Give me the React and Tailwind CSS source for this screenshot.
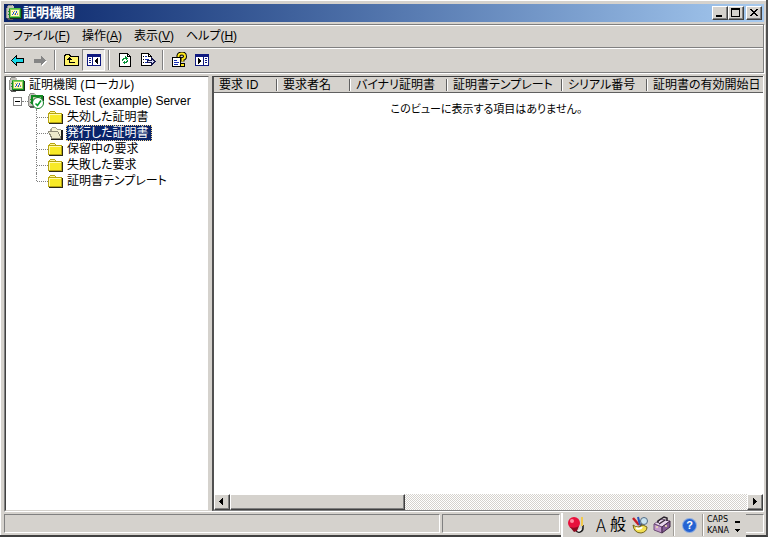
import React from "react";

const raised =
  "border border-t-white border-l-white border-r-[#404040] border-b-[#404040] shadow-[inset_-1px_-1px_0_#808080] bg-[#d5d2cd]";

function Px({ w = 16, h = 16, children }) {
  return (
    <svg
      width={w}
      height={h}
      viewBox={`0 0 ${w} ${h}`}
      shapeRendering="crispEdges"
      aria-hidden="true"
      className="block shrink-0"
    >
      {children}
    </svg>
  );
}

function AuthorityIcon() {
  return (
    <Px>
      <path d="M2 0h5v1h1v13H1V2h1z" fill="#c4c2bc" />
      <path d="M0 3h1v10H0zM1 1h1v2H1zM2 0h4v1H2z" fill="#8e8e8a" />
      <path d="M1 13h6v2H2v-1H1z" fill="#5a5a58" />
      <path d="M2 6h1v1H2zM2 9h1v1H2z" fill="#2f9a30" />
      <path d="M15 4h1v10H4v-1h11z" fill="#1c2a1c" />
      <path d="M3 3h12v10H3z" fill="#128a22" />
      <path d="M3 3h11v1H3z" fill="#4fc048" />
      <path d="M4 4h10v8H4z" fill="#8fce58" />
      <path d="M5 5h8v6H5z" fill="#fffbc4" />
      <path d="M6 9h1v1H6zM7 7h1v2H7zM9 8h1v2H9zM10 6h1v2h-1z" fill="#2450c8" />
      <path d="M6 6h1v1H6zM8 9h1v1H8zM11 8h1v1h-1z" fill="#e8b41c" />
      <path d="M8 6h1v1H8zM11 9h1v1h-1z" fill="#5a78c8" />
    </Px>
  );
}

function ServerIcon() {
  return (
    <Px>
      <path d="M2 0h5v1h1v13H1V2h1z" fill="#c4c2bc" />
      <path d="M0 3h1v10H0zM1 1h1v2H1zM2 0h4v1H2z" fill="#8e8e8a" />
      <path d="M1 13h5v2H2v-1H1z" fill="#5a5a58" />
      <path d="M2 6h1v1H2zM2 9h1v1H2z" fill="#2f9a30" />
      <path d="M3 2h12v9H3z" fill="#128a22" />
      <path d="M5 4h8v3H5z" fill="#c9c9a8" />
      <path d="M15 3h1v5h-1z" fill="#222" />
      <g shapeRendering="auto">
        <circle cx="10" cy="10" r="5.500" fill="#fff" stroke="#0b7a20" strokeWidth="1" />
        <path d="M7.500 10.500l2 2 3.500-5" fill="none" stroke="#06a02c" strokeWidth="1.600" />
      </g>
    </Px>
  );
}

function FolderIcon() {
  return (
    <Px>
      <path d="M0 4h1V3h1V2h5v1h1v1h6v10H0z" fill="#b8a610" />
      <path d="M1 5h12v8H1z" fill="#f8ea28" />
      <path d="M2 3h5v1H2z" fill="#fff79a" />
      <path d="M1 5h12v1H1zM1 5h1v8H1z" fill="#fffbb0" />
      <path d="M14 5h1v10H1v-1h13z" fill="#2c2a18" />
    </Px>
  );
}

function OpenFolderIcon() {
  return (
    <Px>
      <path d="M2 4h1V3h1V2h4v1h1v1h4v10H3z" fill="#a5a294" />
      <path d="M4 3h4v1h1v1h4v8H5z" fill="#f6f3d4" />
      <path d="M0 6h10v1h1v2h1v2h1v3H3v-2H2v-2H1V8H0z" fill="#8d8a78" />
      <path d="M1 7h9v2h1v2h1v2H4v-2H3V9H2V8H1z" fill="#edeacb" />
      <path d="M13 5h2v10H3v-1h10z" fill="#1e1e1a" />
    </Px>
  );
}

function BackIcon() {
  return (
    <Px>
      <path
        d="M2.500 8.500l5-5v3h7v4h-7v3z"
        fill="#18d8e8"
        stroke="#000"
        strokeLinejoin="miter"
      />
    </Px>
  );
}

function ForwardIcon() {
  return (
    <Px>
      <path d="M15 9l-5 5v-3H3v-1h7V6z" fill="#fff" />
      <path d="M14 8.500l-5-5v3H2v4h7v3z" fill="#858585" />
    </Px>
  );
}

function UpIcon() {
  return (
    <Px>
      <path d="M1 3h1V2h5v1h1v1h8v10H1z" fill="#000" />
      <path d="M2 4h1V3h3v1h1v1h8v8H2z" fill="#fff36a" />
      <path d="M6 5h1v1h1v1h1v1H7v2h5v1H6V8H4V7h1V6h1z" fill="#000" />
    </Px>
  );
}

function PaneIcon({ flip }) {
  return (
    <Px>
      <path d="M1 2h14v12H1z" fill="#101a80" />
      <path d={flip ? "M2 5h7v8H2zM10 5h4v8h-4z" : "M2 5h4v8H2zM7 5h7v8H7z"} fill="#fff" />
      <path d={flip ? "M4 6v6l4-3z" : "M12 6v6L8 9z"} fill="#000" />
      <path
        d={flip ? "M11 6h2v1h-2zM11 8h2v1h-2zM11 10h2v1h-2z" : "M3 6h2v1H3zM3 8h2v1H3zM3 10h2v1H3z"}
        fill="#101a80"
      />
    </Px>
  );
}

function RefreshIcon() {
  return (
    <Px>
      <path d="M2 1h9v1h1v1h1v1h1v11H2z" fill="#000" />
      <path d="M3 2h7v3h3v9H3zM11 3h1v1h-1z" fill="#fff" />
      <path
        d="M8 4h1v1h1v1h1v1h-1v1H9V7H7v1H6v1H5V7h1V6h2zM10 8h1v2h-1v1H8v1H7v-1H6v-1h1V9h1v1h1V9h1z"
        fill="#079438"
      />
    </Px>
  );
}

function ExportIcon() {
  return (
    <Px>
      <path d="M1 1h8v1h1v1h1v1h1v10H1z" fill="#000" />
      <path d="M2 2h6v3h3v8H2zM9 3h1v1H9z" fill="#fff" />
      <path d="M3 4h1v1H3zM3 7h1v1H3zM3 10h1v1H3z" fill="#000" />
      <path d="M5 4h2v1H5zM5 7h4v1H5zM5 10h2v1H5z" fill="#1830b0" />
      <path d="M7 8h4V5h1v1h1v1h1v1h1v1h1v1h-1v1h-1v1h-1v1h-1v1h-1v-3H7z" fill="#17194f" />
      <path d="M8 9h4V8h1v1h1v1h-1v1h-1v-1H8z" fill="#d8dcf8" />
    </Px>
  );
}

function HelpIcon() {
  return (
    <Px>
      <path d="M1 5h9v10H1z" fill="#000" />
      <path d="M2 6h7v8H2z" fill="#fff" />
      <path d="M3 8h3v1H3zM3 10h5v1H3zM3 12h4v1H3z" fill="#1830b0" />
      <g shapeRendering="auto" fill="none">
        <path d="M7.500 5V3.500Q8 1.500 11 1.500t3 3Q14 6.500 11.500 7v2.500" stroke="#000" strokeWidth="4" />
        <path d="M7.500 5V3.500Q8 1.500 11 1.500t3 3Q14 6.500 11.500 7v2.500" stroke="#ffe81c" strokeWidth="2" />
      </g>
      <path d="M9 11h5v4H9z" fill="#000" />
      <path d="M10 12h3v2h-3z" fill="#ffe81c" />
    </Px>
  );
}

function ToolButton({ label, pressed, disabled, children }) {
  return (
    <button
      type="button"
      aria-label={label}
      aria-pressed={pressed}
      disabled={disabled}
      className={
        "flex h-[22px] w-[23px] items-center justify-center border " +
        (pressed
          ? "border-t-[#808080] border-l-[#808080] border-r-white border-b-white bg-[#ebe9e6]"
          : "border-transparent")
      }
    >
      {children}
    </button>
  );
}

function ToolSep() {
  return (
    <span className="flex w-2 justify-center">
      <span className="h-5 w-[2px] border-l border-r border-l-[#808080] border-r-white" />
    </span>
  );
}

const menus = [
  ["ファイル", "F"],
  ["操作", "A"],
  ["表示", "V"],
  ["ヘルプ", "H"],
];

const folders = [
  "失効した証明書",
  "発行した証明書",
  "保留中の要求",
  "失敗した要求",
  "証明書テンプレート",
];

const columns = [
  ["要求 ID", "w-16"],
  ["要求者名", "w-[73px]"],
  ["バイナリ証明書", "w-[97px]"],
  ["証明書テンプレート", "w-[115px]"],
  ["シリアル番号", "w-[85px]"],
  ["証明書の有効開始日", ""],
];

function TitleBar() {
  const btn = "flex h-[14px] w-4 items-center justify-center " + raised;
  return (
    <header className="flex h-[18px] items-center bg-gradient-to-r from-[#0a246a] to-[#a6caf0] pl-[2px] pr-[2px]">
      <AuthorityIcon />
      <h1 className="flex-1 pl-[1px] text-[13px] leading-[18px] font-bold text-white">証明機関</h1>
      <button type="button" aria-label="最小化" className={btn}>
        <Px w={10} h={10}><path d="M1 7h6v2H1z" /></Px>
      </button>
      <button type="button" aria-label="最大化" className={btn}>
        <Px w={10} h={10}><path d="M0 0h9v9H0zM1 2v6h7V2z" fillRule="evenodd" /></Px>
      </button>
      <button type="button" aria-label="閉じる" className={"ml-[2px] " + btn}>
        <Px w={10} h={10}>
          <path d="M1 1h2v1h1v1h2V2h1V1h2v1H8v1H7v1H6v1h1v1h1v1h1v1H7V7H6V6H4v1H3v1H1V7h1V6h1V5h1V4H3V3H2V2H1z" />
        </Px>
      </button>
    </header>
  );
}

function Tree() {
  return (
    <nav
      aria-label="コンソール ツリー"
      className="w-[204px] shrink-0 border border-t-[#606060] border-l-[#404040] border-r-[#d5d2cd] border-b-[#d5d2cd] bg-white pl-[3px]"
    >
      <ul>
        <li>
          <a href="#root" className="flex h-4 items-center gap-1">
            <AuthorityIcon />
            <span>証明機関 (ローカル)</span>
          </a>
          <ul>
            <li>
              <div className="flex h-4 items-center pl-1">
                <button
                  type="button"
                  aria-label="折りたたむ"
                  className="flex h-[9px] w-[9px] items-center justify-center border border-[#808080] bg-white"
                >
                  <span className="h-px w-[5px] bg-black" />
                </button>
                <span className="w-[6px] border-t border-dotted border-[#808080]" />
                <a href="#server" className="flex items-center gap-1">
                  <ServerIcon />
                  <span>SSL Test (example) Server</span>
                </a>
              </div>
              <ul className="pl-[27px]">
                {folders.map((name, i) => {
                  const selected = i === 1;
                  const last = i === folders.length - 1;
                  return (
                    <li key={name} className="flex h-4 items-center">
                      <span
                        className={
                          "self-start border-l border-dotted border-[#808080] " +
                          (last ? "h-2" : "h-4")
                        }
                      />
                      <span className="w-[11px] border-t border-dotted border-[#808080]" />
                      <a href={"#folder" + i} className="flex items-center gap-[2px]">
                        {selected ? <OpenFolderIcon /> : <FolderIcon />}
                        <span
                          className={
                            "block h-4 border border-dotted pr-[2px] leading-[14px] " +
                            (selected
                              ? "border-[#f5db95] bg-[#0a246a] text-white"
                              : "border-transparent")
                          }
                        >
                          {name}
                        </span>
                      </a>
                    </li>
                  );
                })}
              </ul>
            </li>
          </ul>
        </li>
      </ul>
    </nav>
  );
}

function ListView() {
  return (
    <main className="flex min-w-0 flex-1 flex-col border-t border-l-2 border-b border-t-[#404040] border-l-[#505050] border-b-[#808080] bg-white">
      <div className="min-h-0 flex-1 overflow-hidden">
        <table className="w-full table-fixed border-collapse">
          <thead>
            <tr className="h-4 bg-[#d5d2cd] shadow-[inset_0_-1px_0_#606060]">
              {columns.map(([name, width], i) => (
                <th
                  key={name}
                  scope="col"
                  className={"overflow-hidden p-0 text-left font-normal whitespace-nowrap " + width}
                >
                  <span className="flex h-4 items-center justify-between pl-[5px]">
                    {name}
                    {i < columns.length - 1 && (
                      <span className="h-3 w-[2px] border-l border-r border-l-[#606060] border-r-white" />
                    )}
                  </span>
                </th>
              ))}
            </tr>
          </thead>
          <tbody>
            <tr>
              <td colSpan={6} className="p-0 pt-2 pr-1 text-center text-[11px] leading-4">
                このビューに表示する項目はありません。
              </td>
            </tr>
          </tbody>
        </table>
      </div>
      <div className="flex h-4 shrink-0 bg-[repeating-conic-gradient(#ffffff_0_25%,#d5d2cd_0_50%)] bg-[length:2px_2px]">
        <button type="button" aria-label="左へ" className={"flex w-4 items-center justify-center " + raised}>
          <Px w={8} h={8}><path d="M5 0v7h-1v-1h-1v-1h-1v-1h-1v-1h1v-1h1v-1h1v-1z" /></Px>
        </button>
        <div className={"w-[175px] " + raised} />
        <div className="flex-1" />
        <button type="button" aria-label="右へ" className={"flex w-4 items-center justify-center " + raised}>
          <Px w={8} h={8}><path d="M2 0v7h1v-1h1v-1h1v-1h1v-1h-1v-1h-1v-1h-1v-1z" /></Px>
        </button>
      </div>
    </main>
  );
}

function LanguageBar() {
  const sep = "h-[22px] w-[2px] border-l border-r border-l-[#a09d98] border-r-white";
  return (
    <aside
      aria-label="言語バー"
      className="absolute right-[22px] bottom-0 flex h-6 w-[185px] items-center border-l-2 border-l-white bg-[#d5d2cd]"
    >
      <button type="button" aria-label="IME" className="ml-[3px]">
        <svg width="20" height="18" viewBox="0 0 20 18" className="block" aria-hidden="true">
          <path d="M10 11v3q1 3 4 2 3-1 3-4V9" fill="none" stroke="#222" strokeWidth="1.600" />
          <path d="M11 14q2 2 4-1" fill="none" stroke="#eee" strokeWidth="1.500" />
          <path d="M16 10V1" stroke="#f1c94c" strokeWidth="2" />
          <circle cx="8" cy="7" r="6" fill="#e8103c" />
          <path d="M4 11q5 2 9-1l-2 5-3 1z" fill="#8c0a20" />
          <circle cx="6" cy="5" r="2" fill="#ff8ba0" />
        </svg>
      </button>
      <button type="button" aria-label="入力モード" className="ml-[7px] w-[16px] text-center font-['Noto_Sans_CJK_JP',sans-serif] text-[17px] leading-[18px] font-light">A</button>
      <button type="button" aria-label="変換モード" className="w-[18px] text-center text-[16px] leading-[18px]">般</button>
      <button type="button" aria-label="IME パッド" className="ml-1">
        <svg width="18" height="18" viewBox="0 0 18 18" className="block" aria-hidden="true">
          <path d="M2 2l6 7" stroke="#c61c24" strokeWidth="2.500" />
          <path d="M7 1l2 8" stroke="#2855be" strokeWidth="2" />
          <circle cx="13" cy="5" r="3.500" fill="#c8e2ef" stroke="#516b85" />
          <path d="M11 8l-3 4" stroke="#555" strokeWidth="2" />
          <path d="M2 9q5 4 10 0l4 2q0 5-6 6-7 0-8-8z" fill="#f2df52" stroke="#746518" />
          <path d="M5 12q4 2 6-1" stroke="#fff" strokeWidth="2" fill="none" />
        </svg>
      </button>
      <button type="button" aria-label="ツール" className="ml-1">
        <svg width="18" height="18" viewBox="0 0 18 18" className="block" aria-hidden="true">
          <path d="M1 8l7-5 9 2-8 6z" fill="#e8d6ec" stroke="#7a5a80" />
          <path d="M5 7V5l6-4 3 1v3" fill="none" stroke="#2a222c" strokeWidth="1.500" />
          <path d="M6 8l6-4" stroke="#3b2b3c" strokeWidth="1.500" />
          <path d="M1 8l8 3v6l-8-3z" fill="#c39acb" stroke="#6d4a76" />
          <path d="M9 11l8-6v6l-8 6z" fill="#855c96" stroke="#402746" />
          <path d="M4 10v2M13 9v2" stroke="#f1dfad" strokeWidth="1.500" />
        </svg>
      </button>
      <span className={"ml-[2px] " + sep} />
      <button
        type="button"
        aria-label="ヘルプ"
        className="ml-[8px] flex h-[13px] w-[13px] items-center justify-center rounded-full bg-[#2463d3] text-[11px] leading-none font-bold text-white shadow-[0_0_0_1px_#89a9df]"
      >
        ?
      </button>
      <span className={"ml-[6px] " + sep} />
      <div className="ml-[3px] flex flex-col font-['DejaVu_Sans',sans-serif] text-[8px] leading-[11px]">
        <button type="button" className="text-left">CAPS</button>
        <button type="button" className="text-left">KANA</button>
      </div>
      <button type="button" aria-label="オプション" className="ml-[6px]">
        <Px w={6} h={16}><path d="M0 4h5v2H0zM0 12h5v1H4v1H3v1H2v-1H1v-1H0z" /></Px>
      </button>
    </aside>
  );
}

export default function App() {
  const pane =
    "border border-t-[#808080] border-l-[#808080] border-r-white border-b-white";
  return (
    <div className="relative h-screen overflow-hidden font-['Liberation_Sans','Noto_Sans_CJK_JP',sans-serif] text-[12px] leading-4 text-black [font-feature-settings:'palt']">
      <div className="flex h-full flex-col border-r-2 border-b-2 border-r-[#505050] border-b-[#404040] bg-[#d5d2cd]">
        <div className="flex min-h-0 flex-1 flex-col border-t border-l border-t-white border-l-white pt-[3px] pr-[2px] pb-[2px] pl-[3px]">
          <TitleBar />
          <div className="mt-[2px] border border-[#808080] shadow-[inset_1px_1px_0_#fff,1px_1px_0_#fff]">
            <nav aria-label="メニュー" className="flex h-[22px] items-center pl-[2px]">
              {menus.map(([name, key]) => (
                <button key={key} type="button" className="px-[6px]">
                  {name}(<u>{key}</u>)
                </button>
              ))}
            </nav>
            <div role="toolbar" aria-label="ツール バー" className="flex h-[25px] items-center border-t border-t-[#808080] shadow-[inset_0_1px_0_#fff]">
              <ToolButton label="戻る"><BackIcon /></ToolButton>
              <ToolButton label="進む" disabled><ForwardIcon /></ToolButton>
              <ToolSep />
              <ToolButton label="1 つ上のレベルへ"><UpIcon /></ToolButton>
              <ToolButton label="コンソール ツリーの表示" pressed><PaneIcon /></ToolButton>
              <ToolSep />
              <ToolButton label="最新の情報に更新"><RefreshIcon /></ToolButton>
              <ToolButton label="一覧のエクスポート"><ExportIcon /></ToolButton>
              <ToolSep />
              <ToolButton label="ヘルプ"><HelpIcon /></ToolButton>
              <ToolButton label="操作ウィンドウの表示"><PaneIcon flip /></ToolButton>
            </div>
          </div>
          <div className="mt-[3px] flex min-h-0 flex-1 gap-[3px] border-b border-l border-r border-b-white border-l-[#808080] border-r-white">
            <Tree />
            <ListView />
          </div>
          <footer className="mt-[2px] flex h-[19px] shrink-0 gap-[2px]">
            <div className={"flex-1 " + pane} />
            <div className={"w-[118px] " + pane} />
            <div className={"w-[202px] " + pane} />
          </footer>
        </div>
      </div>
      <LanguageBar />
    </div>
  );
}
